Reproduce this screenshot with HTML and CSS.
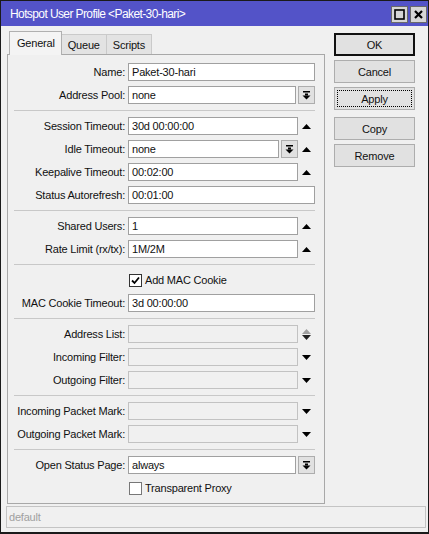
FILE: index.html
```html
<!DOCTYPE html>
<html lang="en">
<head>
<meta charset="UTF-8">
<meta name="viewport" content="width=device-width, initial-scale=1.0">
<title>Hotspot User Profile</title>
<link rel="stylesheet" href="styles.css">
</head>
<body>

<div class="window">
  <div class="titlebar">
    <span class="title">Hotspot User Profile &lt;Paket-30-hari&gt;</span>
    <div class="title-buttons">
      <span class="title-btn">
        <svg width="11" height="11" viewBox="0 0 11 11"><rect x="1" y="1" width="9" height="9" fill="none" stroke="#000" stroke-width="1.6"/></svg>
      </span>
      <span class="title-btn">
        <svg width="11" height="11" viewBox="0 0 11 11"><path d="M2 2 L9 9 M9 2 L2 9" stroke="#000" stroke-width="2.2"/></svg>
      </span>
    </div>
  </div>

  <div class="content">
    <div class="main">
      <div class="tabs">
        <span class="tab active">General</span>
        <span class="tab">Queue</span>
        <span class="tab">Scripts</span>
      </div>

      <div class="panel">
        <div class="section">
          <div class="row">
            <span class="label">Name:</span>
            <div class="field"><div class="input">Paket-30-hari</div></div>
          </div>
          <div class="row">
            <span class="label">Address Pool:</span>
            <div class="field">
              <div class="input">none</div>
              <span class="drop"><svg width="9" height="9" viewBox="0 0 9 9"><rect x="1" y="0" width="7" height="1.5"/><rect x="3" y="2.5" width="3" height="2"/><polygon points="0.5,4.5 8.5,4.5 4.5,8.5"/></svg></span>
            </div>
          </div>
        </div>

        <div class="section">
          <div class="row">
            <span class="label">Session Timeout:</span>
            <div class="field">
              <div class="input">30d 00:00:00</div>
              <span class="spin"><svg width="9" height="5" viewBox="0 0 9 5"><polygon points="0,5 4.5,0 9,5"/></svg></span>
            </div>
          </div>
          <div class="row">
            <span class="label">Idle Timeout:</span>
            <div class="field">
              <div class="input">none</div>
              <span class="drop"><svg width="9" height="9" viewBox="0 0 9 9"><rect x="1" y="0" width="7" height="1.5"/><rect x="3" y="2.5" width="3" height="2"/><polygon points="0.5,4.5 8.5,4.5 4.5,8.5"/></svg></span>
              <span class="spin"><svg width="9" height="5" viewBox="0 0 9 5"><polygon points="0,5 4.5,0 9,5"/></svg></span>
            </div>
          </div>
          <div class="row">
            <span class="label">Keepalive Timeout:</span>
            <div class="field">
              <div class="input">00:02:00</div>
              <span class="spin"><svg width="9" height="5" viewBox="0 0 9 5"><polygon points="0,5 4.5,0 9,5"/></svg></span>
            </div>
          </div>
          <div class="row">
            <span class="label">Status Autorefresh:</span>
            <div class="field"><div class="input">00:01:00</div></div>
          </div>
        </div>

        <div class="section">
          <div class="row">
            <span class="label">Shared Users:</span>
            <div class="field">
              <div class="input">1</div>
              <span class="spin"><svg width="9" height="5" viewBox="0 0 9 5"><polygon points="0,5 4.5,0 9,5"/></svg></span>
            </div>
          </div>
          <div class="row">
            <span class="label">Rate Limit (rx/tx):</span>
            <div class="field">
              <div class="input">1M/2M</div>
              <span class="spin"><svg width="9" height="5" viewBox="0 0 9 5"><polygon points="0,5 4.5,0 9,5"/></svg></span>
            </div>
          </div>
        </div>

        <div class="section">
          <div class="row">
            <span class="label"></span>
            <div class="check-field">
              <span class="checkbox checked"><svg width="11" height="11" viewBox="0 0 11 11"><path d="M2 5.5 L4.5 8 L9 2.5" fill="none" stroke="#000" stroke-width="1.8"/></svg></span>
              <span>Add MAC Cookie</span>
            </div>
          </div>
          <div class="row">
            <span class="label">MAC Cookie Timeout:</span>
            <div class="field"><div class="input">3d 00:00:00</div></div>
          </div>
        </div>

        <div class="section">
          <div class="row">
            <span class="label">Address List:</span>
            <div class="field">
              <div class="input disabled"></div>
              <span class="spin"><svg width="9" height="11" viewBox="0 0 9 11"><polygon points="0,5 4.5,0 9,5" fill="#a0a0a0"/><polygon points="0,6 9,6 4.5,11" fill="#222"/></svg></span>
            </div>
          </div>
          <div class="row">
            <span class="label">Incoming Filter:</span>
            <div class="field">
              <div class="input disabled"></div>
              <span class="spin"><svg width="9" height="5" viewBox="0 0 9 5"><polygon points="0,0 9,0 4.5,5"/></svg></span>
            </div>
          </div>
          <div class="row">
            <span class="label">Outgoing Filter:</span>
            <div class="field">
              <div class="input disabled"></div>
              <span class="spin"><svg width="9" height="5" viewBox="0 0 9 5"><polygon points="0,0 9,0 4.5,5"/></svg></span>
            </div>
          </div>
        </div>

        <div class="section">
          <div class="row">
            <span class="label">Incoming Packet Mark:</span>
            <div class="field">
              <div class="input disabled"></div>
              <span class="spin"><svg width="9" height="5" viewBox="0 0 9 5"><polygon points="0,0 9,0 4.5,5"/></svg></span>
            </div>
          </div>
          <div class="row">
            <span class="label">Outgoing Packet Mark:</span>
            <div class="field">
              <div class="input disabled"></div>
              <span class="spin"><svg width="9" height="5" viewBox="0 0 9 5"><polygon points="0,0 9,0 4.5,5"/></svg></span>
            </div>
          </div>
        </div>

        <div class="section last">
          <div class="row">
            <span class="label">Open Status Page:</span>
            <div class="field">
              <div class="input">always</div>
              <span class="drop"><svg width="9" height="9" viewBox="0 0 9 9"><rect x="1" y="0" width="7" height="1.5"/><rect x="3" y="2.5" width="3" height="2"/><polygon points="0.5,4.5 8.5,4.5 4.5,8.5"/></svg></span>
            </div>
          </div>
          <div class="row">
            <span class="label"></span>
            <div class="check-field">
              <span class="checkbox"></span>
              <span>Transparent Proxy</span>
            </div>
          </div>
        </div>
      </div>
    </div>

    <div class="side">
      <button class="btn default">OK</button>
      <button class="btn">Cancel</button>
      <button class="btn focused"><span>Apply</span></button>
      <button class="btn spaced">Copy</button>
      <button class="btn">Remove</button>
    </div>
  </div>

  <div class="statusbar">default</div>
</div>

</body>
</html>
```

FILE: styles.css
```css
body {
  margin: 0;
  padding: 0;
  font-family: "Liberation Sans", Arial, sans-serif;
  font-size: 11px;
  letter-spacing: -0.2px;
  color: #111;
  background-color: #f0f0f0;
}

.window {
  width: 429px;
  height: 534px;
  box-sizing: border-box;
  border: 1px solid #1a1a1a;
  border-bottom-width: 2px;
  background-color: #f0f0f0;
  display: flex;
  flex-direction: column;
}

.titlebar {
  height: 25px;
  background-color: #5353c8;
  color: #fff;
  display: flex;
  align-items: center;
  justify-content: space-between;
  padding: 0 1px 0 9px;
}

.title {
  font-size: 12px;
  letter-spacing: -0.6px;
}

.title-buttons {
  display: flex;
  gap: 2px;
  margin-top: 2px;
}

.title-btn {
  width: 17px;
  height: 17px;
  box-sizing: border-box;
  background-color: #d6d6d6;
  border: 1px solid #6a6a6a;
  display: flex;
  align-items: center;
  justify-content: center;
}

.content {
  display: flex;
  padding: 5px 0 0 6px;
  gap: 9px;
}

.main {
  width: 318px;
  display: flex;
  flex-direction: column;
}

.tabs {
  display: flex;
  align-items: flex-end;
  margin-left: 2px;
  height: 23px;
}

.tab {
  height: 20px;
  line-height: 20px;
  padding: 0 6px;
  box-sizing: border-box;
  background-color: #e3e3e3;
  border: 1px solid #cacaca;
  border-bottom: none;
  margin-left: -1px;
}

.tab.active {
  height: 24px;
  line-height: 22px;
  margin-bottom: -1px;
  margin-left: 0;
  padding: 0 6px 0 7px;
  background-color: #f4f4f4;
  border-color: #b0b0b0;
  position: relative;
  z-index: 1;
}

.panel {
  border: 1px solid #a8a8a8;
  padding: 2px 9px 0 6px;
}

.section {
  display: flex;
  flex-direction: column;
  gap: 5px;
  padding: 6px 0;
  border-bottom: 1px solid #c8c8c8;
}

.section.last {
  border-bottom: none;
}

.row {
  display: grid;
  grid-template-columns: 111px 187px;
  column-gap: 3px;
  height: 18px;
  align-items: center;
}

.label {
  text-align: right;
  white-space: nowrap;
}

.field {
  display: flex;
  align-items: center;
  height: 18px;
}

.input {
  flex: 1;
  height: 18px;
  box-sizing: border-box;
  border: 1px solid #a0a0a0;
  background-color: #fff;
  padding: 0 3px;
  line-height: 16px;
  white-space: nowrap;
}

.input.disabled {
  background-color: #f0f0f0;
  border-color: #c2c2c2;
}

.drop {
  width: 17px;
  height: 18px;
  box-sizing: border-box;
  margin-left: 2px;
  background-color: #e1e1e1;
  border: 1px solid #adadad;
  display: flex;
  align-items: center;
  justify-content: center;
}

.spin {
  width: 17px;
  display: flex;
  align-items: center;
  justify-content: center;
}

.check-field {
  display: flex;
  align-items: center;
  gap: 3px;
  padding-left: 1px;
}

.checkbox {
  width: 13px;
  height: 13px;
  box-sizing: border-box;
  border: 1px solid #777;
  background-color: #fff;
  display: flex;
  align-items: center;
  justify-content: center;
}

.checkbox.checked {
  border-color: #333;
}

.side {
  display: flex;
  flex-direction: column;
  gap: 4px;
  padding-top: 2px;
}

.btn {
  width: 81px;
  height: 23px;
  font-family: inherit;
  font-size: 11px;
  letter-spacing: -0.2px;
  color: #111;
  background-color: #e1e1e1;
  border: 1px solid #adadad;
  padding: 0;
}

.btn.default {
  border: 2px solid #111;
}

.btn.focused {
  padding: 2px;
}

.btn.focused span {
  display: flex;
  align-items: center;
  justify-content: center;
  height: 100%;
  border: 1px dotted #000;
  box-sizing: border-box;
}

.btn.spaced {
  margin-top: 3px;
}

.statusbar {
  margin: 2px 2px 0 5px;
  height: 22px;
  box-sizing: border-box;
  border: 1px solid #c4c4c4;
  color: #a0a0a0;
  padding-left: 2px;
  line-height: 20px;
}
```
